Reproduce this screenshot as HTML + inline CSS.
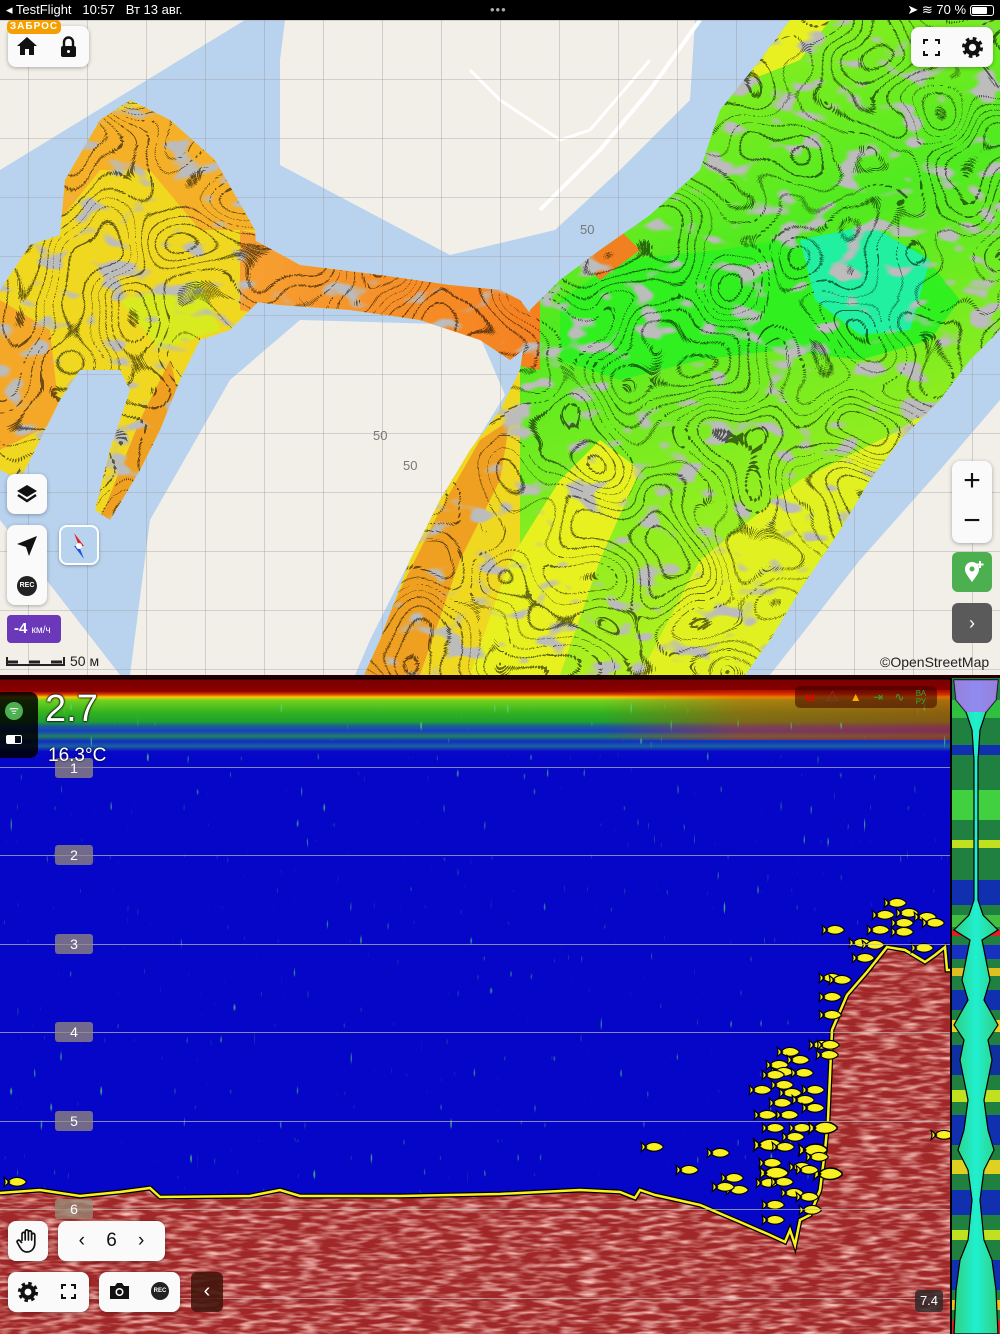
<!DOCTYPE html>
<html><head><meta charset="utf-8"><style>
*{margin:0;padding:0;box-sizing:border-box}
body{width:1000px;height:1334px;overflow:hidden;position:relative;font-family:"Liberation Sans","Noto Sans CJK SC",sans-serif;background:#000}
.abs{position:absolute}
.btn{position:absolute;background:#fafafa;border-radius:8px;box-shadow:0 1px 4px rgba(0,0,0,.3)}
.lbl{position:absolute;left:55px;width:38px;height:20px;background:rgba(150,140,120,.75);border-radius:3px;color:#fff;font-size:14px;text-align:center;line-height:20px}
.hl{position:absolute;left:0;width:950px;height:1px;background:rgba(190,190,190,.7)}
</style></head><body>
<svg width="0" height="0" style="position:absolute">
<defs>
<symbol id="gear" viewBox="-12 -12 24 24"><circle r="6" fill="none" stroke="#111" stroke-width="4.5"/><circle r="9" fill="none" stroke="#111" stroke-width="4" stroke-dasharray="3.6 3.47"/></symbol>
<symbol id="fish" viewBox="-11 -5 22 10" overflow="visible"><path d="M-7 0 L-13 -5 L-12 0 L-13 5Z M-9 0 C-5 -6 5 -7 11 -1 L11 1 C5 6 -5 6 -9 0Z" fill="#f8f020" stroke="#000" stroke-width="1.3"/></symbol>
</defs></svg>
<!-- status bar -->
<div class="abs" style="left:0;top:0;width:1000px;height:20px;background:#000;color:#fff;font-size:13px;line-height:20px">
<span style="position:absolute;left:6px">◂ TestFlight&nbsp;&nbsp; 10:57 &nbsp; Вт 13 авг.</span>
<span style="position:absolute;left:490px;letter-spacing:1px;color:#aaa">•••</span>
<span style="position:absolute;right:34px">➤ ≋ 70 %</span>
<span style="position:absolute;right:6px;top:5px;width:24px;height:11px;border:1px solid #fff;border-radius:3px"><span style="position:absolute;left:1px;top:1px;width:15px;height:7px;background:#fff;border-radius:1px"></span></span>
</div>
<!-- map -->
<svg class="abs" style="left:0;top:20px" width="1000" height="655" viewBox="0 20 1000 655">
<defs>
<pattern id="g" x="28" y="20" width="59" height="59" patternUnits="userSpaceOnUse"><path d="M0 0V59M0 0H59" stroke="#9a9a9a" stroke-width="0.8" fill="none"/></pattern>
<linearGradient id="gr" x1="0" y1="0" x2="0.3" y2="1"><stop offset="0" stop-color="#a8f020"/><stop offset=".45" stop-color="#50ea20"/><stop offset="1" stop-color="#b8f020"/></linearGradient>
<linearGradient id="ch" x1="0" y1="0" x2="1" y2="0"><stop offset="0" stop-color="#f7a030"/><stop offset="1" stop-color="#f58020"/></linearGradient>
<clipPath id="bath">
<path d="M0 290 L30 245 60 235 65 180 100 120 130 100 170 120 215 160 255 230 260 300 230 330 200 340 180 380 160 430 140 470 110 520 95 510 110 450 130 390 120 370 80 370 60 400 40 440 20 480 0 470Z"/>
<path d="M245 235 L300 265 380 275 450 285 500 290 520 300 535 320 530 345 510 360 480 340 420 320 350 310 280 305 240 300Z"/>
<path d="M530 310 L560 280 600 250 650 215 700 170 720 110 760 60 790 20 1000 20 1000 330 970 360 940 400 900 440 870 480 840 530 800 590 770 640 745 675 364 675 380 640 410 560 440 500 470 450 500 410 520 370Z"/>
</clipPath>
<filter id="cont" x="0" y="0" width="1" height="1"><feTurbulence type="fractalNoise" baseFrequency="0.01" numOctaves="2" seed="3"/><feColorMatrix type="matrix" values="0 0 0 0 0  0 0 0 0 0  0 0 0 0 0  1 0 0 0 0"/><feComponentTransfer><feFuncA type="discrete" tableValues="0 0 0 0 0 0 0 0 0 0 0 0 0 0 0 0 0 0 0 0 0 0 0 0 0 0 0 0 0 0 0 0 0 0 0 0 0 0 0 1 0 0 0 0 0 0 0 0 0 1 0 0 0 0 0 0 0 0 0 1 0 0 0 0 0 0 0 0 0 1 0 0 0 0 0 0 0 0 0 1 0 0 0 0 0 0 0 0 0 1 0 0 0 0 0 0 0 0 0 1 0 0 0 0 0 0 0 0 0 1 0 0 0 0 0 0 0 0 0 1 0 0 0 0 0 0 0 0 0 0 0 0 0 0 0 0 0 0 0 0 0 0 0 0 0 0 0 0 0 0 0 0 0 0 0 0 0 0 0 0 0"/></feComponentTransfer></filter>
<filter id="spot" x="0" y="0" width="1" height="1"><feTurbulence type="fractalNoise" baseFrequency="0.03 0.05" numOctaves="2" seed="7"/><feColorMatrix type="matrix" values="0 0 0 0 0.5  0 0 0 0 0.5  0 0 0 0 0.5  9 0 0 0 -5.2"/></filter>
</defs>
<rect x="0" y="20" width="1000" height="655" fill="#b9d3ee"/>
<g fill="#f2efe9">
<path d="M0 20 L245 20 0 170Z"/>
<path d="M285 20 L695 20 690 100 620 170 555 230 450 255 280 165 280 60Z"/>
<path d="M300 320 L475 325 505 395 440 500 370 640 355 675 130 675 150 520 230 380Z"/>
<path d="M0 520 L120 675 0 675Z"/>
<path d="M1000 400 L1000 675 770 675 860 560 940 470Z"/>
</g>
<path d="M540 210 L600 150 650 90 700 20" stroke="#fff" stroke-width="4" fill="none"/>
<path d="M470 70 L500 100 560 140 590 130 650 60" stroke="#fff" stroke-width="3" fill="none"/>
<rect x="0" y="20" width="1000" height="655" fill="url(#g)"/>
<!-- bathymetry -->
<g clip-path="url(#bath)">
<rect x="0" y="20" width="540" height="655" fill="#f0d820"/>
<rect x="520" y="20" width="480" height="655" fill="url(#gr)"/>
<path d="M60 120 L180 100 260 230 200 230 150 170 100 170 60 220Z" fill="#f5b028"/>
<path d="M0 300 L50 330 60 420 0 450Z" fill="#f5a828"/>
<path d="M120 300 L200 280 220 330 160 350Z" fill="#d8ea20"/>
<path d="M140 420 L170 360 180 400 130 520 100 520Z" fill="#f0a020"/>
<path d="M240 230 L540 290 540 370 240 310Z" fill="url(#ch)"/>
<path d="M560 300 L620 260 720 250 780 240 860 230 920 250 960 300 930 340 860 360 780 350 700 360 620 380 560 360Z" fill="#30f020"/>
<path d="M800 240 L870 225 930 260 910 330 860 335 815 300Z" fill="#20f0a0"/>
<path d="M580 260 L620 230 640 250 600 280Z" fill="#f08020"/>
<path d="M364 675 L400 590 440 510 480 440 510 420 500 480 460 560 420 675Z" fill="#f0a020"/>
<path d="M470 675 L510 560 560 480 600 440 640 470 600 560 560 675Z" fill="#e8f020"/>
<path d="M640 675 L700 560 800 480 900 430 940 400 920 440 860 520 800 600 760 675Z" fill="#e0f020"/>
<path d="M880 470 L940 400 975 360 955 410 900 480Z" fill="#f0a030"/>
<path d="M760 20 L830 20 800 60 750 80Z" fill="#e8f020"/>
<rect x="0" y="20" width="1000" height="655" filter="url(#spot)"/>
<rect x="0" y="20" width="1000" height="655" filter="url(#cont)" opacity=".55"/>
</g>
<text x="580" y="234" font-size="13" fill="#777">50</text>
<text x="373" y="440" font-size="13" fill="#777">50</text>
<text x="403" y="470" font-size="13" fill="#777">50</text>
<text x="880" y="667" font-size="14" fill="#222">©OpenStreetMap</text>
<path d="M7 657V665H64V657" stroke="#222" stroke-width="2" fill="none"/><path d="M7 662H64" stroke="#222" stroke-width="3" stroke-dasharray="11 11" fill="none"/>
<text x="70" y="666" font-size="14" fill="#222">50 м</text>
</svg>
<!-- map top buttons -->
<div class="btn" style="left:8px;top:26px;width:81px;height:41px"></div>
<div class="abs" style="left:7px;top:20px;width:54px;height:14px;background:#f5a000;border-radius:5px;color:#fff;font-size:10px;font-weight:bold;text-align:center;line-height:14px;letter-spacing:1px">ЗАБРОС</div>
<svg class="abs" style="left:16px;top:36px" width="22" height="20"><path d="M1 10 L11 1 L21 10 H18 V19 H13 V13 H9 V19 H4 V10Z" fill="#111"/></svg>
<svg class="abs" style="left:60px;top:36px" width="17" height="22"><path d="M4 10V6a4.5 4.5 0 0 1 9 0v4" stroke="#111" stroke-width="2.4" fill="none"/><rect x="1" y="10" width="15" height="11" rx="2" fill="#111"/><circle cx="8.5" cy="15.5" r="1.5" fill="#fff"/></svg>
<div class="btn" style="left:911px;top:27px;width:82px;height:40px"></div>
<svg class="abs" style="left:923px;top:39px" width="17" height="17"><path d="M1 5V1H5M12 1H16V5M16 12V16H12M5 16H1V12" stroke="#111" stroke-width="2" fill="none"/></svg>
<svg class="abs" style="left:961px;top:36px" width="23" height="23"><use href="#gear"/></svg>
<!-- left controls -->
<div class="btn" style="left:7px;top:474px;width:40px;height:40px"></div>
<svg class="abs" style="left:16px;top:483px" width="22" height="22"><path d="M11 2 21 8 11 14 1 8Z" fill="#111"/><path d="M2 12 11 18 20 12" stroke="#111" stroke-width="2.5" fill="none"/></svg>
<div class="btn" style="left:7px;top:525px;width:40px;height:80px"></div>
<svg class="abs" style="left:16px;top:535px" width="22" height="22"><path d="M21 1 1 9 10 12 13 21Z" fill="#111"/></svg>
<div class="abs" style="left:17px;top:576px;width:20px;height:20px;border-radius:50%;background:#222;color:#fff;font-size:7px;font-weight:bold;text-align:center;line-height:20px">REC</div>
<div class="abs" style="left:59px;top:525px;width:40px;height:40px;background:#b8d3ee;border:2px solid #fff;border-radius:8px;box-shadow:0 1px 3px rgba(0,0,0,.3)"></div>
<svg class="abs" style="left:70px;top:531px" width="18" height="30"><path d="M4 2 9 15 14 15Z" fill="#e02020"/><path d="M4 15 14 28 9 15Z" fill="#2050e0"/><circle cx="9" cy="15" r="3" fill="#fff"/></svg>
<div class="abs" style="left:7px;top:615px;width:54px;height:28px;background:#6a38b8;border-radius:4px;color:#fff;font-size:15px;font-weight:bold;line-height:28px;padding-left:7px">-4 <span style="font-size:10px;font-weight:normal">км/ч</span></div>
<!-- right controls -->
<div class="btn" style="left:952px;top:461px;width:40px;height:82px;font-size:30px;color:#111;text-align:center;line-height:40px">+<br>−</div>
<div class="abs" style="left:952px;top:552px;width:40px;height:40px;background:#4caf50;border-radius:6px"></div>
<svg class="abs" style="left:962px;top:560px" width="24" height="24"><path d="M10 22C4 14 3 12 3 9a7 7 0 0 1 14 0c0 3-1 5-7 13Z" fill="#fff"/><circle cx="10" cy="9" r="2.5" fill="#4caf50"/><path d="M18 1V8M14.5 4.5H21.5" stroke="#fff" stroke-width="2"/></svg>
<div class="abs" style="left:952px;top:603px;width:40px;height:40px;background:#5a5a5a;border-radius:6px;color:#fff;font-size:18px;text-align:center;line-height:40px">›</div>
<!-- sonar -->
<svg class="abs" style="left:0;top:675px" width="1000" height="659" viewBox="0 675 1000 659">
<defs>
<linearGradient id="band" gradientUnits="userSpaceOnUse" x1="0" y1="675" x2="0" y2="760">
<stop offset="0" stop-color="#000"/><stop offset=".045" stop-color="#000"/><stop offset=".06" stop-color="#7a0000"/><stop offset=".19" stop-color="#8a0000"/><stop offset=".23" stop-color="#e04000"/><stop offset=".26" stop-color="#f0d000"/><stop offset=".30" stop-color="#70d020"/><stop offset=".45" stop-color="#30b020"/><stop offset=".55" stop-color="#20a030"/><stop offset=".6" stop-color="#1a6090"/><stop offset=".66" stop-color="#1840c0"/><stop offset=".72" stop-color="#208060"/><stop offset=".78" stop-color="#1030c0"/><stop offset=".84" stop-color="#1a60a0"/><stop offset=".9" stop-color="#0808c8"/><stop offset="1" stop-color="#0606c8"/>
</linearGradient>
<linearGradient id="rb" x1="0" x2="1"><stop offset="0" stop-color="#e03000" stop-opacity="0"/><stop offset=".4" stop-color="#e03000" stop-opacity=".6"/><stop offset="1" stop-color="#d02000" stop-opacity=".7"/></linearGradient>
<filter id="rock" x="0" y="0" width="1" height="1"><feTurbulence type="fractalNoise" baseFrequency="0.05 0.25" numOctaves="2" seed="2"/><feColorMatrix type="matrix" values="0 0 0 0 0.95  0 0 0 0 0.55  0 0 0 0 0.5  2.2 0 0 0 -0.9"/></filter>
<filter id="nz" x="0" y="0" width="1" height="1"><feTurbulence type="fractalNoise" baseFrequency="0.3 0.06" numOctaves="1" seed="5"/><feColorMatrix type="matrix" values="0 0 0 0 0.1  0 0 0 0 0.7  0 0 0 0 0.2  12 0 0 0 -8.8"/></filter>
<linearGradient id="sp" x1="0" x2="1"><stop offset="0" stop-color="#30d080"/><stop offset=".5" stop-color="#20f0d0"/><stop offset="1" stop-color="#30d080"/></linearGradient>
</defs>
<rect x="0" y="675" width="950" height="659" fill="#0606c8"/>
<rect x="0" y="675" width="950" height="90" fill="url(#band)"/>
<rect x="600" y="690" width="350" height="50" fill="url(#rb)" opacity=".8"/>
<rect x="0" y="700" width="950" height="500" filter="url(#nz)" opacity=".7"/>
<path d="M0 1193 L40 1190 80 1196 120 1192 150 1188 160 1197 250 1196 280 1190 300 1196 400 1196 500 1194 580 1190 620 1192 635 1198 640 1190 655 1195 700 1205 740 1222 770 1235 785 1242 790 1230 795 1245 800 1220 810 1215 820 1190 825 1150 828 1120 832 1030 847 995 867 972 887 947 905 950 925 962 935 955 945 947 947 970 950 970 V1334 H0Z" fill="#a02828"/>
<clipPath id="bot"><path d="M0 1193 L40 1190 80 1196 120 1192 150 1188 160 1197 250 1196 280 1190 300 1196 400 1196 500 1194 580 1190 620 1192 635 1198 640 1190 655 1195 700 1205 740 1222 770 1235 785 1242 790 1230 795 1245 800 1220 810 1215 820 1190 825 1150 828 1120 832 1030 847 995 867 972 887 947 905 950 925 962 935 955 945 947 947 970 950 970 V1334 H0Z"/></clipPath>
<rect x="0" y="940" width="950" height="394" filter="url(#rock)" clip-path="url(#bot)"/>
<path d="M0 1193 L40 1190 80 1196 120 1192 150 1188 160 1197 250 1196 280 1190 300 1196 400 1196 500 1194 580 1190 620 1192 635 1198 640 1190 655 1195 700 1205 740 1222 770 1235 785 1242 790 1230 795 1245 800 1220 810 1215 820 1190 825 1150 828 1120 832 1030 847 995 867 972 887 947 905 950 925 962 935 955 945 947 947 970 950 970" stroke="#000" stroke-width="5" fill="none"/>
<path d="M0 1193 L40 1190 80 1196 120 1192 150 1188 160 1197 250 1196 280 1190 300 1196 400 1196 500 1194 580 1190 620 1192 635 1198 640 1190 655 1195 700 1205 740 1222 770 1235 785 1242 790 1230 795 1245 800 1220 810 1215 820 1190 825 1150 828 1120 832 1030 847 995 867 972 887 947 905 950 925 962 935 955 945 947 947 970 950 970" stroke="#f8f020" stroke-width="2.5" fill="none"/>
<g>
<use href="#fish" x="886" y="896" width="20" height="14"/><use href="#fish" x="874" y="908" width="20" height="14"/><use href="#fish" x="898" y="906" width="20" height="14"/><use href="#fish" x="916" y="910" width="20" height="14"/><use href="#fish" x="924" y="916" width="20" height="14"/><use href="#fish" x="893" y="916" width="20" height="14"/><use href="#fish" x="869" y="923" width="20" height="14"/><use href="#fish" x="893" y="925" width="20" height="14"/><use href="#fish" x="824" y="923" width="20" height="14"/><use href="#fish" x="851" y="936" width="20" height="14"/><use href="#fish" x="864" y="938" width="20" height="14"/><use href="#fish" x="854" y="951" width="20" height="14"/><use href="#fish" x="913" y="941" width="20" height="14"/><use href="#fish" x="821" y="971" width="20" height="14"/><use href="#fish" x="831" y="973" width="20" height="14"/><use href="#fish" x="821" y="990" width="20" height="14"/><use href="#fish" x="821" y="1008" width="20" height="14"/><use href="#fish" x="811" y="1038" width="20" height="14"/><use href="#fish" x="819" y="1038" width="20" height="14"/><use href="#fish" x="818" y="1048" width="20" height="14"/><use href="#fish" x="779" y="1045" width="20" height="14"/><use href="#fish" x="789" y="1053" width="20" height="14"/><use href="#fish" x="768" y="1058" width="20" height="14"/><use href="#fish" x="773" y="1065" width="20" height="14"/><use href="#fish" x="793" y="1066" width="20" height="14"/><use href="#fish" x="764" y="1068" width="20" height="14"/><use href="#fish" x="751" y="1083" width="20" height="14"/><use href="#fish" x="773" y="1078" width="20" height="14"/><use href="#fish" x="781" y="1086" width="20" height="14"/><use href="#fish" x="804" y="1083" width="20" height="14"/><use href="#fish" x="794" y="1093" width="20" height="14"/><use href="#fish" x="771" y="1096" width="20" height="14"/><use href="#fish" x="804" y="1101" width="20" height="14"/><use href="#fish" x="756" y="1108" width="20" height="14"/><use href="#fish" x="778" y="1108" width="20" height="14"/><use href="#fish" x="764" y="1121" width="20" height="14"/><use href="#fish" x="791" y="1121" width="20" height="14"/><use href="#fish" x="811" y="1119" width="26" height="18"/><use href="#fish" x="756" y="1136" width="26" height="18"/><use href="#fish" x="774" y="1140" width="20" height="14"/><use href="#fish" x="801" y="1141" width="26" height="18"/><use href="#fish" x="784" y="1130" width="20" height="14"/><use href="#fish" x="761" y="1156" width="20" height="14"/><use href="#fish" x="791" y="1160" width="20" height="14"/><use href="#fish" x="808" y="1150" width="20" height="14"/><use href="#fish" x="762" y="1164" width="26" height="18"/><use href="#fish" x="816" y="1165" width="26" height="18"/><use href="#fish" x="798" y="1163" width="20" height="14"/><use href="#fish" x="758" y="1176" width="20" height="14"/><use href="#fish" x="773" y="1175" width="20" height="14"/><use href="#fish" x="783" y="1186" width="20" height="14"/><use href="#fish" x="798" y="1190" width="20" height="14"/><use href="#fish" x="764" y="1198" width="20" height="14"/><use href="#fish" x="801" y="1203" width="20" height="14"/><use href="#fish" x="764" y="1213" width="20" height="14"/><use href="#fish" x="643" y="1140" width="20" height="14"/><use href="#fish" x="709" y="1146" width="20" height="14"/><use href="#fish" x="678" y="1163" width="20" height="14"/><use href="#fish" x="723" y="1171" width="20" height="14"/><use href="#fish" x="728" y="1183" width="20" height="14"/><use href="#fish" x="714" y="1180" width="20" height="14"/><use href="#fish" x="933" y="1128" width="20" height="14"/><use href="#fish" x="6" y="1175" width="20" height="14"/>
</g>
<!-- right strip -->
<rect x="950" y="675" width="50" height="659" fill="#208040"/>
<g>
<rect x="952" y="700" width="48" height="18" fill="#30c040"/><rect x="952" y="745" width="48" height="10" fill="#1030b0"/><rect x="952" y="790" width="48" height="30" fill="#40d040"/><rect x="952" y="840" width="48" height="8" fill="#c0e020"/><rect x="952" y="880" width="48" height="25" fill="#1030b0"/><rect x="952" y="915" width="48" height="12" fill="#40c040"/><rect x="952" y="930" width="48" height="6" fill="#e02020"/><rect x="952" y="945" width="48" height="14" fill="#1830c0"/><rect x="952" y="968" width="48" height="8" fill="#e0c020"/><rect x="952" y="990" width="48" height="20" fill="#1030b0"/><rect x="952" y="1020" width="48" height="12" fill="#f0d020"/><rect x="952" y="1045" width="48" height="30" fill="#1030a0"/><rect x="952" y="1090" width="48" height="12" fill="#c0e020"/><rect x="952" y="1115" width="48" height="30" fill="#1030b0"/><rect x="952" y="1160" width="48" height="14" fill="#e0d020"/><rect x="952" y="1190" width="48" height="25" fill="#1030b0"/><rect x="952" y="1230" width="48" height="10" fill="#c0e020"/><rect x="952" y="1260" width="48" height="30" fill="#1030b0"/><rect x="952" y="1300" width="48" height="10" fill="#f0c020"/><rect x="952" y="1320" width="48" height="14" fill="#e02020"/>
</g>
<path d="M954 680 H998 L996 700 L986 712 L980 730 L978 760 L978 900 L983 915 L998 930 L982 940 L986 960 L990 980 L984 1000 L998 1025 L988 1040 L992 1060 L984 1100 L988 1130 L994 1150 L984 1170 L980 1200 L984 1240 L992 1260 L996 1290 L998 1334 H954 L956 1290 L960 1260 L968 1240 L972 1200 L968 1170 L958 1150 L964 1130 L968 1100 L960 1060 L964 1040 L954 1025 L968 1000 L962 980 L966 960 L970 940 L954 930 L969 915 L974 900 L974 760 L972 730 L966 712 L956 700Z" fill="url(#sp)" stroke="#000" stroke-width="1.2"/>
<path d="M954 680 H998 L996 700 L986 712 L966 712 L956 700Z" fill="#c060ff" opacity=".7"/>
<rect x="950" y="675" width="2" height="659" fill="#000"/>
<rect x="0" y="675" width="1000" height="3" fill="#200"/>
</svg>
<div class="hl" style="top:767px"></div><div class="hl" style="top:855px"></div><div class="hl" style="top:944px"></div><div class="hl" style="top:1032px"></div><div class="hl" style="top:1121px"></div><div class="hl" style="top:1209px"></div><div class="hl" style="top:1298px"></div>
<div class="lbl" style="top:758px">1</div><div class="lbl" style="top:845px">2</div><div class="lbl" style="top:934px">3</div><div class="lbl" style="top:1022px">4</div><div class="lbl" style="top:1111px">5</div><div class="lbl" style="top:1199px">6</div>
<!-- sonar overlays -->
<div class="abs" style="left:0;top:692px;width:38px;height:66px;background:rgba(0,0,0,.85);border-radius:0 8px 8px 0"></div>
<div class="abs" style="left:5px;top:702px;width:18px;height:18px;border-radius:50%;background:#4caf50;color:#fff;font-size:11px;text-align:center;line-height:18px">ᯤ</div>
<div class="abs" style="left:6px;top:735px;width:16px;height:9px;border:1.5px solid #fff;border-radius:2px"><div style="width:8px;height:100%;background:#fff"></div></div>
<div class="abs" style="left:45px;top:688px;color:#fff;font-size:38px;text-shadow:0 0 2px #000,0 0 2px #000,0 0 1px #000">2.7</div>
<div class="abs" style="left:48px;top:745px;color:#fff;font-size:19px;text-shadow:0 0 2px #000">16.3°C</div>
<div class="abs" style="left:795px;top:686px;width:142px;height:22px;background:rgba(60,0,0,.55);border-radius:5px;font-size:12px;color:#3a3;line-height:22px;padding-left:10px;letter-spacing:4px"><span style="color:#e00;font-weight:bold">ш</span> <span style="color:#844">△</span> <span style="color:#fa0">▲</span> ⇥ ∿ <span style="font-size:8px;letter-spacing:0;display:inline-block;line-height:8px;vertical-align:middle">ВА<br>РУ</span></div>
<!-- bottom buttons -->
<div class="btn" style="left:8px;top:1221px;width:40px;height:40px"></div>
<svg class="abs" style="left:16px;top:1228px" width="24" height="26"><path d="M6 13V6a1.6 1.6 0 0 1 3.2 0v6V3.5a1.6 1.6 0 0 1 3.2 0V12V4.5a1.6 1.6 0 0 1 3.2 0V12V7a1.6 1.6 0 0 1 3.2 0v8c0 5-3 9-8 9-3 0-5-1.5-7-5l-2.5-4.5a1.6 1.6 0 0 1 2.7-1.7L6 15" stroke="#111" stroke-width="1.7" fill="none" stroke-linejoin="round"/></svg>
<div class="btn" style="left:58px;top:1221px;width:107px;height:40px;font-size:19px;color:#111;line-height:40px;text-align:center;word-spacing:16px">‹ 6 ›</div>
<div class="btn" style="left:8px;top:1272px;width:81px;height:40px"></div>
<svg class="abs" style="left:17px;top:1281px" width="22" height="22"><use href="#gear"/></svg>
<svg class="abs" style="left:61px;top:1284px" width="15" height="15"><path d="M1 5V1H5M10 1H14V5M14 10V14H10M5 14H1V10" stroke="#111" stroke-width="2" fill="none"/></svg>
<div class="btn" style="left:99px;top:1272px;width:81px;height:40px"></div>
<svg class="abs" style="left:109px;top:1282px" width="21" height="18"><path d="M1 4H6L8 1H13L15 4H20V17H1Z" fill="#111"/><circle cx="10.5" cy="10" r="4" fill="#fff"/><circle cx="10.5" cy="10" r="2.5" fill="#111"/></svg>
<div class="abs" style="left:151px;top:1282px;width:18px;height:18px;border-radius:50%;background:#222;color:#fff;font-size:6px;font-weight:bold;text-align:center;line-height:18px">REC</div>
<div class="abs" style="left:191px;top:1272px;width:32px;height:40px;background:rgba(60,20,10,.85);border-radius:6px;color:#fff;font-size:20px;text-align:center;line-height:38px">‹</div>
<div class="abs" style="left:915px;top:1290px;width:28px;height:22px;background:rgba(40,40,40,.8);border-radius:4px;color:#fff;font-size:13px;text-align:center;line-height:22px">7.4</div>
</body></html>
